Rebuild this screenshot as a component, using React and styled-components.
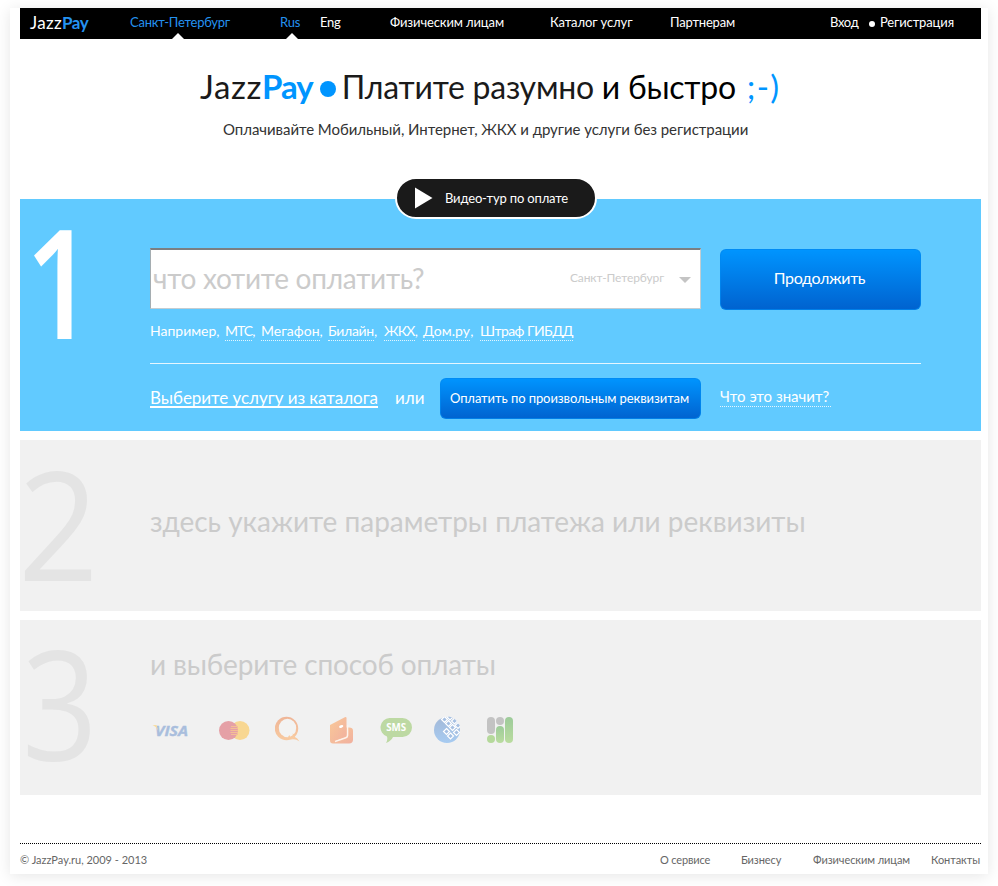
import React from 'react';
import styled, { createGlobalStyle } from 'styled-components';

const Global = createGlobalStyle`
  * { box-sizing: border-box; }
  body { margin: 0; background: #fff; font-family: Lato, "Trebuchet MS", "Open Sans", sans-serif; color: #1a1a1a; }
`;

const Page = styled.div`
  width: 978px;
  height: 866px;
  margin: 8px 10px 12px;
  padding: 0 7px 0 10px;
  background: #fff;
  box-shadow: 0 2px 14px rgba(0, 0, 0, 0.1);
`;

const T = styled.span`
  letter-spacing: ${(p) => p.$ls || 0}px;
  white-space: pre;
  color: ${(p) => p.$c || 'inherit'};
  font-weight: ${(p) => (p.$b ? 700 : 400)};
`;

const TopBar = styled.nav`
  display: grid;
  grid-template-columns: 100px 150px 40px 70px 160px 120px 160px 50px 1fr;
  height: 31px;
  padding-left: 10px;
  background: #000;
  color: #fff;
  font-size: 13px;
  line-height: 28px;
`;

const Brand = styled.div`
  font-size: 17px;
  line-height: 29px;
  white-space: nowrap;
`;

const NavItem = styled.div`
  position: relative;
  white-space: nowrap;
  color: ${(p) => (p.$active ? '#2492f0' : '#fff')};
`;

const Notch = styled.i`
  position: absolute;
  bottom: 0;
  left: ${(p) => p.$left}px;
  border: 6px solid transparent;
  border-top: 0;
  border-bottom-color: #fff;
`;

const LoginItem = styled(NavItem)`
  display: flex;
  align-items: center;
  justify-content: space-between;
  height: 28px;
  padding-right: 5px;
`;

const Dot = styled.i`
  flex: none;
  width: ${(p) => p.$size}px;
  height: ${(p) => p.$size}px;
  border-radius: 50%;
  background: ${(p) => p.$color};
  margin: ${(p) => p.$margin || 0};
`;

const Hero = styled.header`
  height: 139px;
  padding-top: 27px;
`;

const Title = styled.h1`
  display: flex;
  align-items: center;
  margin: 0;
  padding-left: 180px;
  height: 40px;
  font-size: 33px;
  font-weight: 400;
  line-height: 40px;
`;

const Slogan = styled.span`
  width: 405px;
  padding-top: 1px;
  font-size: 32px;
`;

const Subtitle = styled.p`
  margin: 13px 0 0;
  padding-left: 203px;
  font-size: 15px;
  line-height: 20px;
  color: #333;
`;

const VideoButton = styled.button`
  display: flex;
  align-items: center;
  gap: 12px;
  width: 202px;
  height: 42px;
  margin: 38px 0 0 375px;
  padding: 0 0 0 18px;
  position: relative;
  border: 2px solid #fff;
  border-radius: 21px;
  background: #1a1a1a;
  color: #fff;
  font: 13px/20px Lato, sans-serif;
`;

const Step = styled.section`
  display: grid;
  grid-template-columns: 130px 771px;
  align-items: start;
  width: 961px;
  height: ${(p) => p.$h}px;
  margin-bottom: 9px;
  margin-top: ${(p) => p.$mt || 0}px;
  background: ${(p) => (p.$active ? '#61caff' : '#f1f1f1')};
  color: ${(p) => (p.$active ? '#fff' : '#cbcbcb')};
`;

const Numeral = styled.div`
  width: 87px;
  margin: ${(p) => p.$top}px 0 0 ${(p) => p.$left}px;
  font: ${(p) => p.$weight || 500} 152px/152px "Open Sans", sans-serif;
  color: ${(p) => p.$color || '#e4e4e4'};
  transform: scaleX(${(p) => p.$narrow});
  transform-origin: 0 0;
`;

const StepTitle = styled.h2`
  margin: ${(p) => p.$top}px 0 0;
  font-size: 28px;
  line-height: 36px;
  font-weight: 400;
`;

const SearchRow = styled.div`
  display: flex;
  justify-content: space-between;
  margin-top: 49px;
  height: 61px;
`;

const SearchBox = styled.div`
  display: flex;
  align-items: center;
  width: 551px;
  padding: 0 9px 2px 2px;
  background: #fff;
  border: 1px solid #c3cdd2;
  border-top: 2px solid #7b7f82;
  border-left-color: #a5adb1;
  color: #cbcbcb;
`;

const Placeholder = styled.span`
  flex: 1;
  font-size: 28px;
  line-height: 36px;
`;

const City = styled.span`
  display: flex;
  align-items: center;
  gap: 15px;
  font-size: 12px;
  line-height: 18px;
`;

const Arrow = styled.i`
  margin-top: 4px;
  border: 6px solid transparent;
  border-bottom: 0;
  border-top-color: #c4c4c4;
`;

const BlueButton = styled.button`
  width: ${(p) => p.$w}px;
  height: ${(p) => p.$h}px;
  margin-top: ${(p) => p.$mt || 0}px;
  padding: 0 2px ${(p) => p.$pb || 0}px 0;
  border: 1px solid rgba(0, 136, 240, 0.75);
  border-radius: 6px;
  background: linear-gradient(#0095ff, #0062cf) border-box;
  color: #fff;
  font: ${(p) => p.$size}px/20px Lato, sans-serif;
`;

const Examples = styled.div`
  display: grid;
  grid-template-columns: 75px 36px 67px 56px 39px 57px auto;
  height: 42px;
  margin-top: 12px;
  font-size: 14px;
  line-height: 20px;
  white-space: nowrap;
`;

const Dotted = styled.a`
  display: inline-block;
  height: ${(p) => p.$h || 20}px;
  padding-right: ${(p) => p.$pr || 0}px;
  border-bottom: 1px dotted #e4f6ff;
`;

const Alternatives = styled.div`
  display: grid;
  grid-template-columns: 245px 45px 280px auto;
  align-items: start;
  padding-top: 14px;
  border-top: 1px solid #e6f6ff;
  font-size: 17px;
  line-height: 40px;
`;

const CatalogLink = styled.a`
  text-decoration: underline;
  text-decoration-thickness: 1.5px;
  text-underline-offset: 2px;
  text-decoration-skip-ink: none;
`;

const Explain = styled.div`
  padding-top: 8px;
  font-size: 15px;
  line-height: 21px;
`;

const Methods = styled.div`
  display: grid;
  grid-template-columns: 66px 57px 55px 50px 54px 53px auto;
  margin-top: 33px;
  height: 32px;
  padding-left: 2px;
`;

const Footer = styled.footer`
  display: grid;
  grid-template-columns: 640px 81px 72px 118px auto;
  width: 961px;
  margin-top: 48px;
  padding-top: 6px;
  border-top: 1px dotted #000;
  font-size: 11px;
  line-height: 19px;
  color: #666;
`;

const Icon = ({ w, children }) => (
  <svg width={w} height="32" viewBox={`0 0 ${w} 32`} fill="none">{children}</svg>
);

const Visa = () => (
  <Icon w={38}>
    <text x="3" y="21" fontFamily="Open Sans" fontWeight="700" fontStyle="italic" fontSize="15" textLength="33" lengthAdjust="spacingAndGlyphs" fill="#a9bedd" stroke="#a9bedd" strokeWidth=".4">VISA</text>
    <path d="M0.500 10h4l1.800 6q-2-4.500-5.800-6z" fill="#f7dda3" />
  </Icon>
);

const MasterCard = () => (
  <Icon w={34}>
    <circle cx="22" cy="15.500" r="9.500" fill="#f8d792" />
    <circle cx="10.500" cy="15.500" r="9.500" fill="#e5a0a6" />
    <path d="M13 11.500h7M12.500 13.500h7.500M12.500 15.500h7.500M12.500 17.500h7.500M13 19.500h7" stroke="#f4bf94" />
  </Icon>
);

const Qiwi = () => (
  <Icon w={28}>
    <defs>
      <linearGradient id="qiwi" x1="0" y1="0" x2="0" y2="1"><stop stopColor="#efb597" /><stop offset="1" stopColor="#f8caa0" /></linearGradient>
    </defs>
    <circle cx="11.500" cy="13.500" r="11.700" fill="url(#qiwi)" />
    <ellipse cx="12.500" cy="13" rx="8.700" ry="9.300" fill="#f3f3f2" />
    <path d="M13 25q4-1 6.500-3.200 3 1 5 4.700-3.500-2.500-6.500-2.200t-5 .7z" fill="#f8caa0" />
    <path d="M13 22l1.500-2 .5 1.800 3.200-1-.7-2.300 2.500 1.300-1.500 2.700-4 1.200z" fill="#f8caa0" />
  </Icon>
);

const Wallet = () => (
  <Icon w={26}>
    <defs>
      <linearGradient id="wallet" x1="0" y1="0" x2="1" y2="1"><stop stopColor="#f9c998" /><stop offset="1" stopColor="#f1b09f" /></linearGradient>
    </defs>
    <path d="M3 12.500h16q4 0 4 3V24.500q0 4-4 4H3q-3 0-3-3z" fill="url(#wallet)" />
    <path d="M17.500 10v10.500q0 1.700-1.700 2.300L5 26.500" stroke="#fdf3ec" strokeWidth="1.600" />
    <path d="M0 10 14.800 2.300q1.700-.8 1.700 1V19q0 2-1.700 2.700L2 26.500 0 25z" fill="url(#wallet)" />
    <ellipse cx="11.200" cy="11.500" rx="2.200" ry="1.300" fill="#fff" transform="rotate(-20 11.200 11.500)" />
  </Icon>
);

const Sms = () => (
  <Icon w={34}>
    <path d="M9.500 3h13a9.500 9.500 0 0 1 0 19H13q-2 4-7 6 2-3 1-6.500A9.500 9.500 0 0 1 9.500 3z" fill="#bdd9a3" />
    <text x="6.200" y="16.200" fontFamily="Open Sans" fontWeight="700" fontSize="10" textLength="20" lengthAdjust="spacingAndGlyphs" fill="#fff">SMS</text>
  </Icon>
);

const CELLS = [[10.5, 4.500], [16, 2], [14.500, 8.500], [20.500, 6], [18.500, 12.500], [24, 10.500], [12.500, 16.500], [22.500, 17.500], [16.500, 21]];

const WebMoney = () => (
  <Icon w={28}>
    <defs>
      <linearGradient id="globe" x1="0" y1="0" x2="0" y2="1"><stop stopColor="#a3b9d8" /><stop offset="1" stopColor="#a7cbf1" /></linearGradient>
      <clipPath id="disc"><circle cx="13" cy="15" r="13.500" /></clipPath>
    </defs>
    <circle cx="13" cy="15" r="13" fill="url(#globe)" />
    <g clipPath="url(#disc)">
      {CELLS.map(([x, y]) => (
        <path key={`${x}-${y}`} d={`M${x} ${y - 3}l3 3-3 3-3-3z`} fill="#a5bfe2" stroke="#fff" strokeWidth="1.200" />
      ))}
    </g>
  </Icon>
);

const Bars = () => (
  <Icon w={28}>
    <defs>
      <linearGradient id="bar" x1="0" y1="0" x2="0" y2="1"><stop stopColor="#9dcb9a" /><stop offset="1" stopColor="#badc9f" /></linearGradient>
    </defs>
    <rect x="0" y="2" width="8" height="17" rx="4" fill="#c3c3c3" />
    <rect x="9" y="2" width="8" height="8" rx="4" fill="#c3c3c3" />
    <rect x="0" y="20" width="8" height="8" rx="4" fill="#b5d99b" />
    <rect x="9" y="11" width="8" height="17" rx="4" fill="url(#bar)" />
    <rect x="18" y="2" width="8" height="26" rx="4" fill="url(#bar)" />
  </Icon>
);

export default function App() {
  return (
    <>
      <Global />
      <Page>
        <TopBar>
          <Brand><T $ls={0.3}>Jazz</T><T $b $c="#2492f0" $ls={-0.4}>Pay</T></Brand>
          <NavItem $active><T $ls={-0.24}>Санкт-Петербург</T><Notch $left={41.5} /></NavItem>
          <NavItem $active><T $ls={-0.2}>Rus</T><Notch $left={5.5} /></NavItem>
          <NavItem><T $ls={-0.3}>Eng</T></NavItem>
          <NavItem><T $ls={-0.12}>Физическим лицам</T></NavItem>
          <NavItem><T $ls={-0.12}>Каталог услуг</T></NavItem>
          <NavItem><T $ls={-0.18}>Партнерам</T></NavItem>
          <LoginItem><T $ls={-0.25}>Вход</T><Dot $size={6} $color="#fff" $margin="3px 0 0" /></LoginItem>
          <NavItem><T $ls={-0.14}>Регистрация</T></NavItem>
        </TopBar>

        <Hero>
          <Title>
            <T $ls={0.6}>Jazz</T><T $b $c="#0095ff" $ls={-0.9}>Pay</T>
            <Dot $size={16} $color="#0095ff" $margin="6px 6px 0 7px" />
            <Slogan><T $ls={-0.24}>Платите разумно </T><T $c="#000" $ls={-0.24}>и быстро</T></Slogan>
            <T $c="#0095ff" $ls={1.3}>;-)</T>
          </Title>
          <Subtitle><T $ls={-0.05}>Оплачивайте Мобильный, Интернет, ЖКХ и другие услуги без регистрации</T></Subtitle>
          <VideoButton>
            <svg width="18" height="22" viewBox="0 0 18 22"><path d="M0 0.500 17.500 11 0 21.500z" fill="#fff" /></svg>
            <T $ls={-0.16}>Видео-тур по оплате</T>
          </VideoButton>
        </Hero>

        <Step $active $h={232} $mt={21}>
          <Numeral $top={6} $left={5} $narrow={0.8} $weight={600} $color="#fff">1</Numeral>
          <div>
            <SearchRow>
              <SearchBox>
                <Placeholder><T $ls={-0.26}>что хотите оплатить?</T></Placeholder>
                <City><T $ls={-0.1}>Санкт-Петербург</T><Arrow /></City>
              </SearchBox>
              <BlueButton $w={201} $h={61} $size={16} $pb={3} $mt={1}><T $ls={-0.35}>Продолжить</T></BlueButton>
            </SearchRow>
            <Examples>
              <T $ls={0}>Например,</T>
              <span><Dotted><T $ls={-1}>МТС</T></Dotted>,</span>
              <span><Dotted><T $ls={0}>Мегафон</T></Dotted>,</span>
              <span><Dotted><T $ls={-0.3}>Билайн</T></Dotted>,</span>
              <span><Dotted><T $ls={-0.8}>ЖКХ</T></Dotted>,</span>
              <span><Dotted><T $ls={0.1}>Дом.ру</T></Dotted>,</span>
              <span><Dotted><T $ls={-0.55}>Штраф ГИБДД</T></Dotted></span>
            </Examples>
            <Alternatives>
              <CatalogLink><T $ls={-0.04}>Выберите услугу из каталога</T></CatalogLink>
              <T>или</T>
              <BlueButton $w={261} $h={41} $size={13} $pb={1}><T $ls={-0.08}>Оплатить по произвольным реквизитам</T></BlueButton>
              <Explain><Dotted $h={21} $pr={2}><T>Что это значит?</T></Dotted></Explain>
            </Alternatives>
          </div>
        </Step>

        <Step $h={171}>
          <Numeral $top={7} $left={-2} $narrow={0.93}>2</Numeral>
          <StepTitle $top={63}><T $ls={-0.02}>здесь укажите параметры платежа или реквизиты</T></StepTitle>
        </Step>

        <Step $h={175}>
          <Numeral $top={7} $left={2} $narrow={0.87}>3</Numeral>
          <div>
            <StepTitle $top={26}><T $ls={-0.15}>и выберите способ оплаты</T></StepTitle>
            <Methods>
              <Visa /><MasterCard /><Qiwi /><Wallet /><Sms /><WebMoney /><Bars />
            </Methods>
          </div>
        </Step>

        <Footer>
          <T>© JazzPay.ru, 2009 - 2013</T>
          <T $ls={-0.15}>О сервисе</T>
          <T $ls={-0.1}>Бизнесу</T>
          <T $ls={-0.07}>Физическим лицам</T>
          <T $ls={-0.05}>Контакты</T>
        </Footer>
      </Page>
    </>
  );
}
